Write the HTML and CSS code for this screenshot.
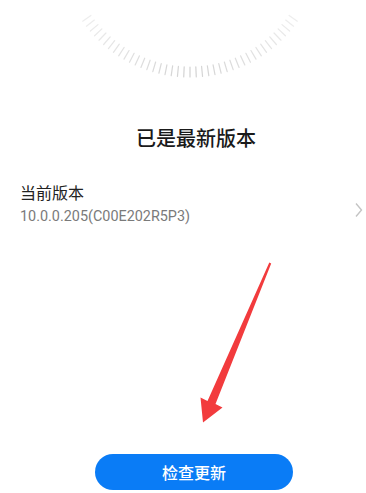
FILE: index.html
```
<!DOCTYPE html>
<html lang="zh-CN">
<head>
  <meta charset="UTF-8">
  <meta name="viewport" content="width=device-width, initial-scale=1.0">
  <title>软件更新</title>
  <link rel="stylesheet" href="styles.css">
</head>
<body>
  <div class="screen">
    <svg class="dial" id="dial" width="366" height="96" viewBox="0 0 366 96"></svg>

    <div class="title">已是最新版本</div>

    <div class="version">
      <div class="version-text">
        <div class="version-label">当前版本</div>
        <div class="version-number">10.0.0.205(C00E202R5P3)</div>
      </div>
      <svg class="chevron" width="8" height="16" viewBox="0 0 8 16">
        <path d="M1 1.5 L6.5 8 L1 14.5" fill="none" stroke="#c4c4c4" stroke-width="1.4"/>
      </svg>
    </div>

    <div class="actions">
      <button class="check">检查更新</button>
    </div>

    <svg class="arrow" width="366" height="493" viewBox="0 0 366 493">
      <polygon points="269.3,262.5 271.2,263.6 215.5,404 222.5,407.5 203,422.5 200.5,397.5 207.5,401" fill="#f23b3d"/>
    </svg>
  </div>

  <script>
    // tick marks of the dial
    const dial = document.getElementById('dial');
    const cx = 190, cy = -54, outer = 131, inner = 121;
    const count = 41, spread = 55;

    for (let i = 0; i < count; i++) {
      const deg = -spread + (2 * spread) * i / (count - 1);
      const rad = deg * Math.PI / 180;
      const sin = Math.sin(rad), cos = Math.cos(rad);
      const line = document.createElementNS('http://www.w3.org/2000/svg', 'line');
      line.setAttribute('x1', cx - inner * sin);
      line.setAttribute('y1', cy + inner * cos);
      line.setAttribute('x2', cx - outer * sin);
      line.setAttribute('y2', cy + outer * cos);
      const fade = 1 - Math.abs(deg) / spread * 0.6;
      line.setAttribute('stroke-opacity', fade.toFixed(2));
      line.setAttribute('class', 'tick');
      dial.appendChild(line);
    }
  </script>
</body>
</html>
```

FILE: styles.css
```
body {
  margin: 0;
  background: #ffffff;
  font-family: Roboto, "Noto Sans CJK SC", sans-serif;
}

.screen {
  position: relative;
  width: 366px;
  height: 493px;
  overflow: hidden;
}

.dial {
  display: block;
}

.dial .tick {
  stroke: #d2d2d2;
  stroke-width: 1.2;
  stroke-linecap: round;
}

.title {
  margin-top: 28px;
  padding-left: 26px;
  text-align: center;
  font-family: "Noto Sans CJK SC", sans-serif;
  font-size: 20px;
  font-weight: 500;
  line-height: 28px;
  color: #1a1a1a;
}

.version {
  display: flex;
  align-items: center;
  justify-content: space-between;
  margin-top: 28px;
  padding-left: 20px;
  padding-right: 3px;
}

.version-label {
  font-family: "Noto Sans CJK SC", sans-serif;
  font-size: 16px;
  line-height: 24px;
  color: #222222;
}

.version-number {
  margin-top: 3px;
  font-size: 14.4px;
  line-height: 20px;
  color: #7a7a7a;
}

.chevron {
  display: block;
  margin-top: 12px;
}

.actions {
  display: flex;
  justify-content: center;
  margin-top: 227px;
  padding-left: 22px;
}

.check {
  width: 198px;
  height: 36px;
  border: none;
  border-radius: 18px;
  background-color: #0a7cf6;
  color: #ffffff;
  font-family: "Noto Sans CJK SC", sans-serif;
  font-size: 16px;
  font-weight: 500;
  cursor: pointer;
}

.arrow {
  position: absolute;
  left: 0;
  top: 0;
  pointer-events: none;
}
```
